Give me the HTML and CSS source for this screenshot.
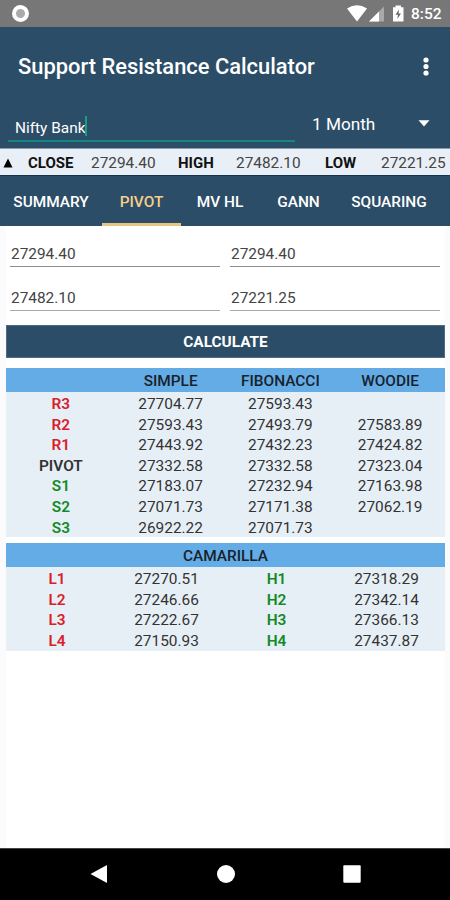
FILE: index.html
```
<!DOCTYPE html>
<html lang="en">
<head>
  <meta charset="UTF-8">
  <meta name="viewport" content="width=device-width, initial-scale=1.0">
  <title>Support Resistance Calculator</title>
  <link rel="stylesheet" href="styles.css">
</head>
<body>
  <div class="status-bar">
    <span class="record-dot"></span>
    <svg class="status-icons" width="62" height="28" viewBox="0 0 62 28">
      <path d="M0 8.600Q10 1.800 20 8.600L10 21.500Z" fill="#fff"/>
      <path d="M37 6.500V21.500H22Z" fill="#a9a9a9"/>
      <path d="M32 11.500V21.500H22Z" fill="#fff"/>
      <path d="M48.500 5.500H54V7.300H56.500V21.500H46V7.300H48.500Z" fill="#fff"/>
      <path d="M52 9.500L48.500 14.800H51L50.300 19L54 13.500H51.500Z" fill="#666"/>
    </svg>
    <span class="clock">8:52</span>
  </div>

  <header>
    <div class="title-row">
      <h1>Support Resistance Calculator</h1>
      <svg width="8" height="20" viewBox="0 0 8 20" fill="#fff">
        <circle cx="4" cy="3" r="2.600"/>
        <circle cx="4" cy="9.500" r="2.600"/>
        <circle cx="4" cy="16" r="2.600"/>
      </svg>
    </div>
    <div class="search-row">
      <div class="search-box"><span>Nifty Bank</span><i class="caret"></i></div>
      <div class="period">
        <span>1 Month</span>
        <svg width="12" height="7" viewBox="0 0 12 7"><path d="M0.500 0.300H11.500L6 6.500Z" fill="#fff"/></svg>
      </div>
    </div>
  </header>

  <div class="ticker">
    <svg width="10" height="10" viewBox="0 0 10 10"><path d="M5 0.500L9.500 9.500H0.500Z" fill="#000"/></svg>
    <b>CLOSE</b><span>27294.40</span>
    <b>HIGH</b><span>27482.10</span>
    <b>LOW</b><span>27221.25</span>
  </div>

  <nav class="tabs">
    <a class="tab-summary">SUMMARY</a>
    <a class="tab-pivot active">PIVOT</a>
    <a class="tab-mvhl">MV HL</a>
    <a class="tab-gann">GANN</a>
    <a class="tab-squaring">SQUARING</a>
  </nav>

  <main>
    <div class="inputs">
      <div class="field">27294.40</div>
      <div class="field">27294.40</div>
      <div class="field light">27482.10</div>
      <div class="field light">27221.25</div>
    </div>

    <div class="calculate">CALCULATE</div>

    <div class="table">
      <div class="table-head cols"><span></span><span>SIMPLE</span><span>FIBONACCI</span><span>WOODIE</span></div>
      <div class="table-body cols">
        <b class="red">R3</b><span>27704.77</span><span>27593.43</span><span></span>
        <b class="red">R2</b><span>27593.43</span><span>27493.79</span><span>27583.89</span>
        <b class="red">R1</b><span>27443.92</span><span>27432.23</span><span>27424.82</span>
        <b>PIVOT</b><span>27332.58</span><span>27332.58</span><span>27323.04</span>
        <b class="green">S1</b><span>27183.07</span><span>27232.94</span><span>27163.98</span>
        <b class="green">S2</b><span>27071.73</span><span>27171.38</span><span>27062.19</span>
        <b class="green">S3</b><span>26922.22</span><span>27071.73</span><span></span>
      </div>
    </div>

    <div class="table camarilla">
      <div class="table-head">CAMARILLA</div>
      <div class="table-body cols">
        <b class="red">L1</b><span>27270.51</span><b class="green">H1</b><span>27318.29</span>
        <b class="red">L2</b><span>27246.66</span><b class="green">H2</b><span>27342.14</span>
        <b class="red">L3</b><span>27222.67</span><b class="green">H3</b><span>27366.13</span>
        <b class="red">L4</b><span>27150.93</span><b class="green">H4</b><span>27437.87</span>
      </div>
    </div>
  </main>

  <footer>
    <svg width="18" height="18" viewBox="0 0 18 18"><path d="M17 0V18L0.500 9Z"/></svg>
    <svg width="18" height="18" viewBox="0 0 18 18"><circle cx="9" cy="9" r="9"/></svg>
    <svg width="18" height="18" viewBox="0 0 18 18"><rect x="0.300" y="0.300" width="17.400" height="17.400" rx="1"/></svg>
  </footer>
</body>
</html>
```
FILE: styles.css
```
/* Base */
* {
  box-sizing: border-box;
}

body {
  margin: 0;
  width: 450px;
  height: 900px;
  display: flex;
  flex-direction: column;
  overflow: hidden;
  background: #fff;
  color: #222;
  font-family: Roboto, sans-serif;
  font-size: 15.4px;
}

/* Status bar */
.status-bar {
  height: 27px;
  display: flex;
  align-items: center;
  background: #777;
  color: #fff;
  padding: 0 8px 0 12px;
}

.record-dot {
  width: 17px;
  height: 17px;
  border: 4px solid #fff;
  border-radius: 50%;
  background: #aaa;
}

.status-icons {
  margin-left: auto;
}

.clock {
  width: 31px;
  margin-left: 2px;
  font-size: 15.5px;
  font-weight: 500;
  padding-top: 1px;
}

/* Header */
header {
  height: 121px;
  background: #2b4d67;
  color: #fff;
}

.title-row {
  height: 79px;
  display: flex;
  align-items: center;
  justify-content: space-between;
  padding: 0 20px 0 18px;
}

h1 {
  margin: 0;
  font-size: 21.9px;
  font-weight: 500;
}

.search-row {
  display: flex;
}

.search-box {
  width: 287px;
  height: 36px;
  margin-left: 8px;
  padding: 10px 0 0 7px;
  display: flex;
  border-bottom: 2px solid #16877f;
  font-size: 15.4px;
  line-height: 25px;
}

.caret {
  width: 2px;
  height: 20px;
  background: #16a085;
}

.period {
  flex: 1;
  height: 35px;
  display: flex;
  align-items: center;
  justify-content: space-between;
  padding: 0 20px 0 17px;
  font-size: 17.2px;
}

/* Ticker */
.ticker {
  height: 27px;
  display: grid;
  grid-template-columns: 25px 63px 87px 58px 89px 56px 1fr;
  align-items: center;
  padding: 1px 0 0 3px;
  background: #e8eff7;
  border-top: 1px solid #8b9caa;
  color: #444;
}

.ticker b {
  color: #111;
  font-size: 15px;
}

/* Tabs */
.tabs {
  height: 51px;
  display: flex;
  background: #2b4d67;
  border-top: 1px solid #123552;
  color: #fff;
  font-size: 15.4px;
  font-weight: 500;
}

.tabs a {
  height: 50px;
  line-height: 52px;
  text-align: center;
}

.tab-summary { width: 102px; }
.tab-pivot { width: 79px; }
.tab-mvhl { width: 78px; }
.tab-gann { width: 79px; }
.tab-squaring { width: 102px; }

.tabs .active {
  color: #f4cf8b;
  border-bottom: 3px solid #eac483;
}

/* Content */
main {
  flex: 1;
  padding: 10px 5px 0 6px;
  box-shadow: inset 6px 0 #fbfbfd, inset -5px 0 #fbfbfd;
}

.inputs {
  display: grid;
  grid-template-columns: 210px 210px;
  column-gap: 10px;
  padding: 0 0 1px 4px;
}

.field {
  height: 31px;
  margin-bottom: 13px;
  padding-top: 5px;
  line-height: 26px;
  border-bottom: 1px solid #8d8d8d;
  padding-left: 1px;
  color: #444;
}

.field.light {
  border-color: #aaa;
}

.calculate {
  height: 33px;
  border: 1px solid #506c82;
  background: #2b4d67;
  color: #fff;
  font-weight: 700;
  font-size: 15.4px;
  line-height: 32px;
  text-align: center;
}

/* Tables */
.table {
  margin-top: 10px;
  text-align: center;
}

.cols {
  display: grid;
  grid-template-columns: repeat(4, 1fr);
}

.table-head {
  height: 25px;
  line-height: 26px;
  background: #64ace6;
  border-bottom: 1px solid #e7eff6;
  color: #18222c;
  font-weight: 500;
}

.table-body {
  grid-auto-rows: 20.6px;
  line-height: 22px;
  background: #e7eff6;
  color: #333;
}

.table-body b {
  font-weight: 600;
}

.red {
  color: #d9202a;
}

.green {
  color: #138a27;
}

.camarilla {
  margin-top: 6px;
}

.camarilla .cols {
  grid-template-columns: 102px 117px 103px 117px;
}

/* Navigation bar */
footer {
  height: 52px;
  display: flex;
  align-items: center;
  justify-content: space-between;
  padding: 0 89px 1px 90px;
  background: #000;
  border-top: 1px solid #444;
}

footer svg {
  fill: #fff;
}
```
